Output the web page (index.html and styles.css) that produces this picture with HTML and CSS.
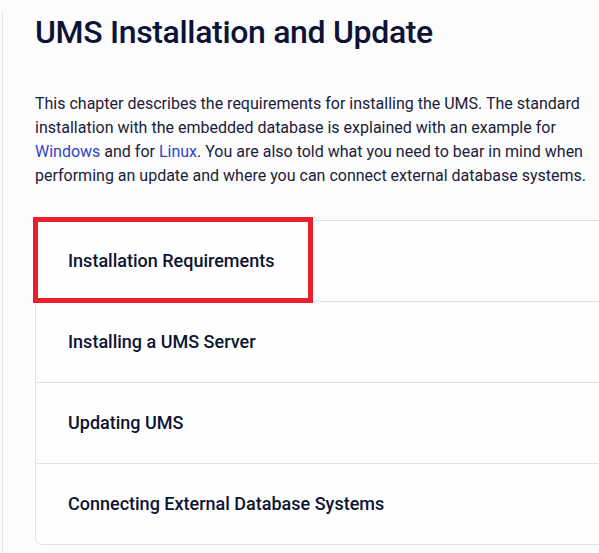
FILE: index.html
```html
<!DOCTYPE html>
<html lang="en">
<head>
<meta charset="utf-8">
<title>UMS Installation and Update</title>
<link rel="stylesheet" href="styles.css">
</head>
<body>
<div class="page">
  <main class="content">
    <h1 class="title">UMS Installation and Update</h1>
    <p class="intro">This chapter describes the requirements for installing the UMS. The standard installation with the embedded database is explained with an example for <a href="#" class="link">Windows</a> and for <a href="#" class="link">Linux</a>. You are also told what you need to bear in mind when performing an update and where you can connect external database systems.</p>
    <div class="card">
      <a href="#" class="row">Installation Requirements</a>
      <a href="#" class="row">Installing a UMS Server</a>
      <a href="#" class="row">Updating UMS</a>
      <a href="#" class="row">Connecting External Database Systems</a>
      <div class="highlight"></div>
    </div>
  </main>
</div>
</body>
</html>
```

FILE: styles.css
```css
html, body {
  margin: 0;
  padding: 0;
  background: #fcfcfc;
  overflow: hidden;
}
.page {
  margin-left: 2px;
  border-left: 1px solid #e2e2ee;
  min-height: 553px;
  font-family: Roboto, "Liberation Sans", sans-serif;
}
.content {
  padding-left: 32px;
  width: 640px;
}
.title {
  margin: 12px 0 0;
  font-size: 32px;
  line-height: 40px;
  font-weight: 500;
  letter-spacing: -0.33px;
  color: #0b1437;
}
.intro {
  margin: 40px 0 0;
  width: 560px;
  font-size: 16px;
  line-height: 24px;
  color: #1a213b;
}
.link {
  color: #2f46c6;
  text-decoration: none;
}
.card {
  position: relative;
  margin-top: 32px;
  border: 1px solid #e2e2ea;
  border-radius: 8px;
  background: #fefefe;
  display: flex;
  flex-direction: column;
}
.row {
  display: block;
  padding: 28px 32px;
  font-size: 18px;
  line-height: 24px;
  font-weight: 500;
  color: #0d1432;
  text-decoration: none;
  border-top: 1px solid #e2e2ea;
}
.row:first-child {
  border-top: none;
}
.highlight {
  position: absolute;
  left: -3px;
  top: -4px;
  width: 270px;
  height: 76px;
  border: 5px solid #ea1f2b;
}
```
